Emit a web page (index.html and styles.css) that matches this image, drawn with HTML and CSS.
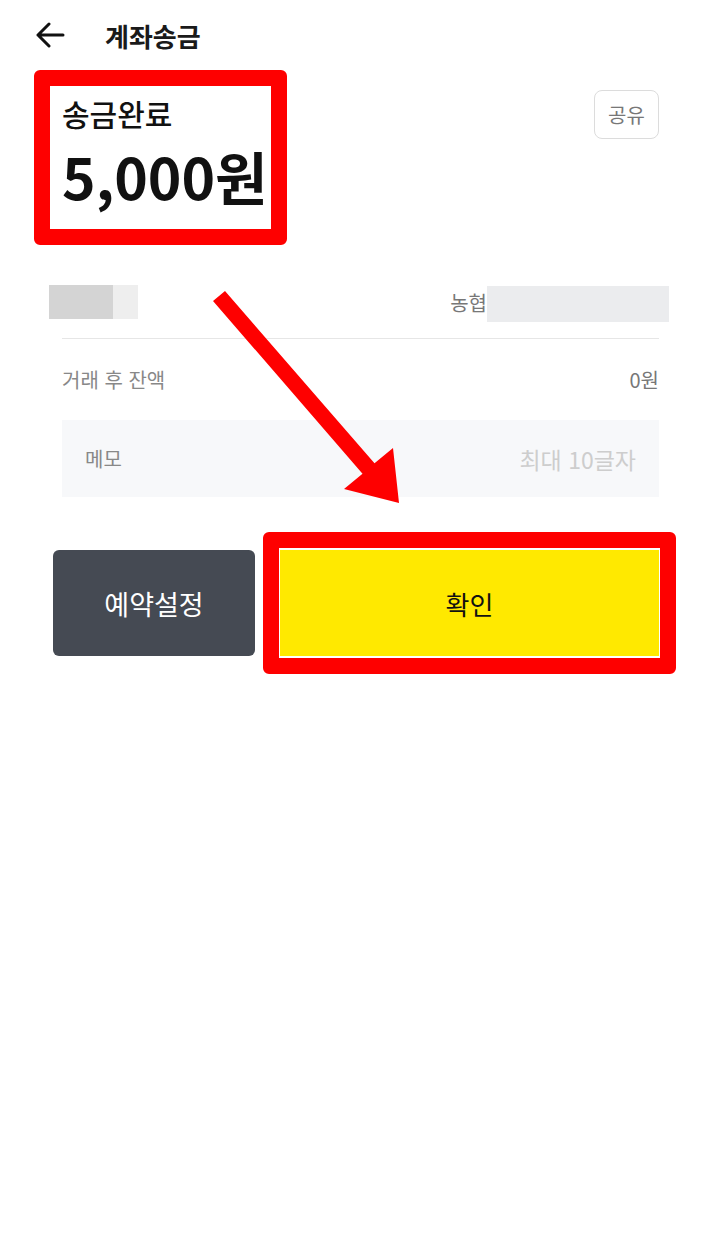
FILE: index.html
```html
<!DOCTYPE html>
<html lang="ko">
<head>
  <meta charset="UTF-8">
  <meta name="viewport" content="width=device-width, initial-scale=1.0">
  <title>계좌송금</title>
  <link rel="stylesheet" href="styles.css">
</head>
<body>
  <header class="top-bar">
    <svg class="back-icon" width="30" height="26" viewBox="0 0 30 26">
      <path d="M3 13 H28 M14 2 L3 13 L14 24" fill="none" stroke="#111" stroke-width="3" stroke-linecap="round" stroke-linejoin="round"/>
    </svg>
    <h1 class="page-title">계좌송금</h1>
  </header>

  <section class="summary">
    <div class="mark-box result-mark">
      <p class="status">송금완료</p>
      <p class="amount">5,000원</p>
    </div>
    <button class="share-button">공유</button>
  </section>

  <div class="detail">
    <div class="row account-row">
      <div class="blur-name">
        <span class="blur-dark"></span>
        <span class="blur-light"></span>
      </div>
      <div class="bank">
        <span class="bank-name">농협</span>
        <span class="blur-account"></span>
      </div>
    </div>
    <div class="row balance-row">
      <span class="label">거래 후 잔액</span>
      <span class="value">0원</span>
    </div>
    <div class="memo">
      <span class="label">메모</span>
      <span class="placeholder">최대 10글자</span>
    </div>
  </div>

  <div class="actions">
    <button class="reserve-button">예약설정</button>
    <div class="mark-box confirm-mark">
      <button class="confirm-button">확인</button>
    </div>
  </div>

  <!-- annotation arrow -->
  <svg class="pointer" width="720" height="1251" viewBox="0 0 720 1251">
    <polygon points="225,291 374.5,463.3 393,448 399,503 344,489 362.5,473.7 213,301" fill="#fe0000"/>
  </svg>
</body>
</html>
```

FILE: styles.css
```css
body {
  margin: 0;
  padding: 0;
  background-color: #fff;
  font-family: "Noto Sans CJK KR", "Noto Sans", sans-serif;
  color: #111;
  position: relative;
  min-height: 1251px;
}

p {
  margin: 0;
}

button {
  font-family: inherit;
  border: none;
  cursor: pointer;
}

.top-bar {
  height: 70px;
  display: flex;
  align-items: center;
  padding-left: 35px;
  box-sizing: border-box;
}

.back-icon {
  display: block;
}

.page-title {
  margin: 0 0 0 40px;
  font-size: 26px;
  font-weight: 700;
  color: #1a1a1a;
}

.summary {
  display: flex;
  justify-content: space-between;
  align-items: flex-start;
  padding: 0 61px 0 34px;
}

.mark-box {
  border: 16px solid #fe0000;
  border-radius: 6px;
  box-sizing: border-box;
}

.result-mark {
  width: 253px;
  height: 175px;
  padding: 10px 0 0 12px;
}

.status {
  font-size: 30px;
  font-weight: 500;
  line-height: 34px;
}

.amount {
  margin-top: 11px;
  font-size: 57px;
  font-weight: 700;
  line-height: 68px;
}

.share-button {
  margin-top: 20px;
  width: 65px;
  height: 49px;
  background-color: #fff;
  border: 1px solid #dcdcdc;
  border-radius: 8px;
  font-size: 20px;
  color: #777;
}

.detail {
  margin: 39px 61px 0 62px;
}

.row {
  display: flex;
  justify-content: space-between;
  align-items: center;
}

.account-row {
  height: 36px;
  padding-bottom: 18px;
  border-bottom: 1px solid #e6e6e6;
}

.blur-name {
  display: flex;
  margin-left: -13px;
  height: 34px;
}

.blur-dark {
  width: 64px;
  background-color: #d4d4d4;
}

.blur-light {
  width: 25px;
  background-color: #eeeeee;
}

.bank {
  display: flex;
  align-items: center;
  margin-right: -10px;
}

.bank-name {
  font-size: 20px;
  color: #777;
}

.blur-account {
  width: 182px;
  height: 36px;
  margin-top: 4px;
  background-color: #ebecee;
}

.balance-row {
  height: 81px;
}

.label {
  font-size: 20px;
  color: #888;
}

.value {
  font-size: 20px;
  color: #777;
}

.memo {
  height: 77px;
  display: flex;
  justify-content: space-between;
  align-items: center;
  padding: 0 23px;
  background-color: #f7f8fa;
}

.placeholder {
  font-size: 23px;
  color: #cdcdcd;
}

.actions {
  display: flex;
  align-items: center;
  gap: 8px;
  margin-top: 35px;
  padding-left: 53px;
}

.reserve-button {
  width: 202px;
  height: 106px;
  background-color: #454a53;
  border-radius: 6px;
  color: #fff;
  font-size: 27px;
  font-weight: 400;
}

.confirm-mark {
  width: 413px;
  padding: 2px 1px;
  background-color: #fff;
}

.confirm-button {
  display: block;
  width: 100%;
  height: 106px;
  background-color: #ffe900;
  color: #111;
  font-size: 26px;
  font-weight: 400;
}

.pointer {
  position: absolute;
  top: 0;
  left: 0;
  pointer-events: none;
}
```
